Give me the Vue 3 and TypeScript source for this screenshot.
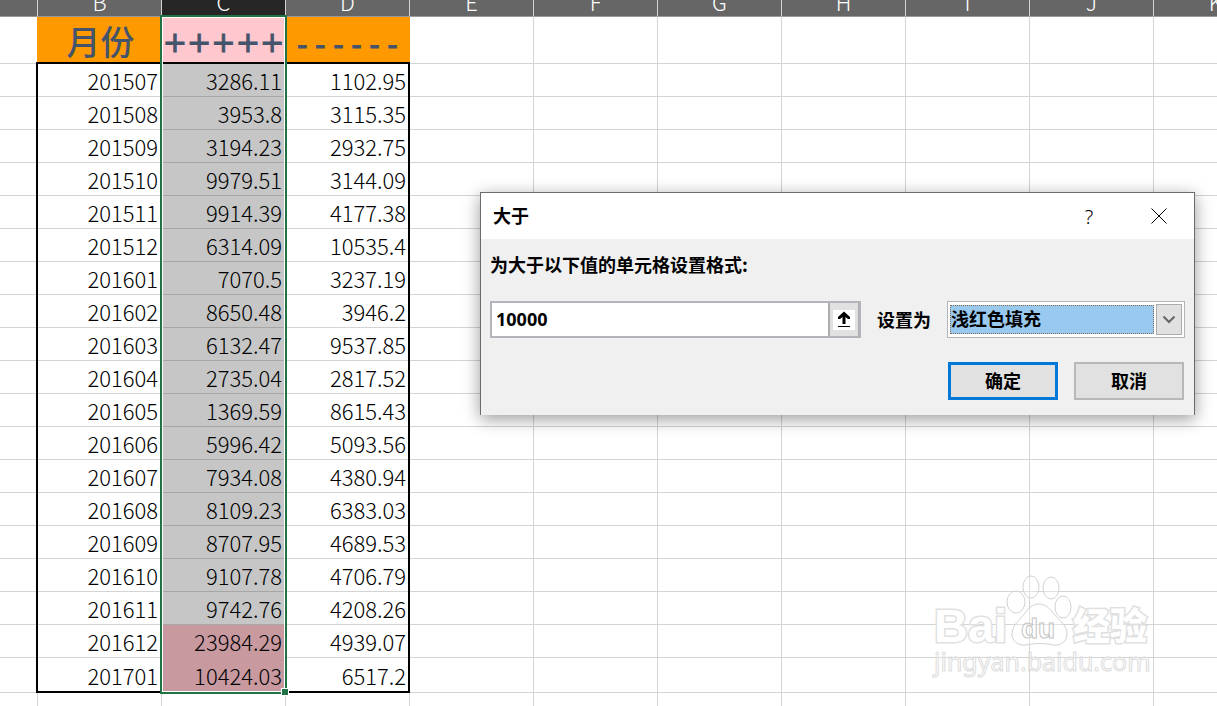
<script setup lang="ts">
import { ref } from 'vue'

interface Row {
  month: string
  income: string
  expense: string
}

const letters: string[] = ['', 'B', 'C', 'D', 'E', 'F', 'G', 'H', 'I', 'J', 'K', 'L', 'M', 'N', 'O']
const emptyColumns = letters.length - 4

const rows: Row[] = [
  { month: '201507', income: '3286.11', expense: '1102.95' },
  { month: '201508', income: '3953.8', expense: '3115.35' },
  { month: '201509', income: '3194.23', expense: '2932.75' },
  { month: '201510', income: '9979.51', expense: '3144.09' },
  { month: '201511', income: '9914.39', expense: '4177.38' },
  { month: '201512', income: '6314.09', expense: '10535.4' },
  { month: '201601', income: '7070.5', expense: '3237.19' },
  { month: '201602', income: '8650.48', expense: '3946.2' },
  { month: '201603', income: '6132.47', expense: '9537.85' },
  { month: '201604', income: '2735.04', expense: '2817.52' },
  { month: '201605', income: '1369.59', expense: '8615.43' },
  { month: '201606', income: '5996.42', expense: '5093.56' },
  { month: '201607', income: '7934.08', expense: '4380.94' },
  { month: '201608', income: '8109.23', expense: '6383.03' },
  { month: '201609', income: '8707.95', expense: '4689.53' },
  { month: '201610', income: '9107.78', expense: '4706.79' },
  { month: '201611', income: '9742.76', expense: '4208.26' },
  { month: '201612', income: '23984.29', expense: '4939.07' },
  { month: '201701', income: '10424.03', expense: '6517.2' },
]

const threshold = ref('10000')
const format = ref('light-red')

const isGreater = (value: string): boolean => Number(value) > Number(threshold.value)
</script>

<template>
  <main class="workbook">
    <table class="sheet">
      <colgroup>
        <col class="col-first" />
        <col v-for="n in letters.length - 1" :key="n" class="col" />
      </colgroup>
      <thead>
        <tr class="letters">
          <th v-for="l in letters" :key="l" scope="col" :class="{ active: l === 'C' }">
            <div class="letter">{{ l }}</div>
          </th>
        </tr>
      </thead>
      <tbody>
        <tr class="titles">
          <td class="before"></td>
          <td class="title month">月份</td>
          <td class="title plus">+++++</td>
          <td class="title minus">------</td>
          <td v-for="n in emptyColumns" :key="n"></td>
        </tr>
        <tr v-for="row in rows" :key="row.month" class="data">
          <td></td>
          <td>{{ row.month }}</td>
          <td class="selected" :class="{ greater: isGreater(row.income) }">{{ row.income }}</td>
          <td>{{ row.expense }}</td>
          <td v-for="n in emptyColumns" :key="n"></td>
        </tr>
        <tr class="blank">
          <td v-for="l in letters" :key="l"></td>
        </tr>
      </tbody>
    </table>

    <div class="frame"></div>
    <div class="selection"><span class="handle"></span></div>

    <svg class="watermark" width="224" height="112" viewBox="0 0 224 112" aria-label="Baidu 经验">
      <g class="outline">
        <text class="bai" x="4" y="72">Bai</text>
        <path d="M109 34 C116 34 120 39 124 44 C129 50 137 55 137 64 C137 72 130 76 123 75 C114 73 105 73 96 75 C88 76 82 71 82 64 C82 55 90 50 95 43 C99 38 102 34 109 34 Z" />
        <ellipse cx="86" cy="32" rx="9" ry="11" />
        <ellipse cx="101" cy="17" rx="8" ry="11" />
        <ellipse cx="121" cy="18" rx="8" ry="11" />
        <ellipse cx="133" cy="37" rx="8" ry="11" />
        <text class="du" x="91" y="68">du</text>
        <text class="jy" x="143" y="70">经验</text>
        <text class="site" x="4" y="101">jingyan.baidu.com</text>
      </g>
    </svg>

    <form class="dialog" role="dialog" aria-labelledby="dialog-title" @submit.prevent>
      <header class="dialog-bar">
        <h1 id="dialog-title">大于</h1>
        <button type="button" class="bar-button" aria-label="帮助">?</button>
        <button type="button" class="bar-button" aria-label="关闭">
          <svg width="16" height="16" viewBox="0 0 16 16"><path d="M0.5 0.5 L15.5 15.5 M15.5 0.5 L0.5 15.5" /></svg>
        </button>
      </header>
      <div class="dialog-body">
        <label for="threshold">为大于以下值的单元格设置格式:</label>
        <div class="fields">
          <div class="range">
            <input id="threshold" v-model="threshold" type="text" />
            <button type="button" class="picker" aria-label="选择区域">
              <svg width="22" height="20" viewBox="0 0 22 20">
                <path class="shaft" d="M11 4 V14" />
                <path class="head" d="M11 1.500 L17 7 V9 H15 L11 6 L7 9 H5 V7 Z" />
                <path class="base" d="M5 16.500 H17" />
              </svg>
            </button>
          </div>
          <label for="format">设置为</label>
          <div class="combo">
            <select id="format" v-model="format">
              <option value="light-red">浅红色填充</option>
            </select>
            <span class="arrow">
              <svg width="14" height="9" viewBox="0 0 14 9"><path d="M1.500 1.500 L7 7 L12.500 1.500" /></svg>
            </span>
          </div>
        </div>
        <div class="actions">
          <button type="submit" class="ok">确定</button>
          <button type="button">取消</button>
        </div>
      </div>
    </form>
  </main>
</template>

<style>
body {
  margin: 0;
  background: #fff;
}
</style>

<style scoped>
.workbook {
  position: relative;
  height: 100vh;
  overflow: hidden;
  font-family: "Noto Sans CJK SC", "Noto Sans", sans-serif;
  color: #000;
}

.sheet {
  width: 1774px;
  table-layout: fixed;
  border-collapse: separate;
  border-spacing: 0;
}

.col-first {
  width: 38px;
}

.col {
  width: 124px;
}

th,
td {
  box-sizing: border-box;
  padding: 0;
  border-right: 1px solid #d4d4d4;
  border-bottom: 1px solid #d4d4d4;
}

.letters th {
  height: 17px;
  background: #666;
  border-bottom-color: #999;
  color: #fff;
  font-size: 22px;
  font-weight: 300;
}

.letters .active {
  background: #262626;
}

.letter {
  display: flex;
  align-items: flex-end;
  justify-content: center;
  height: 16px;
  line-height: 30px;
  overflow: hidden;
}

.titles td {
  height: 47px;
}

.titles .before {
  border-right-color: #f90;
}

.titles .title {
  padding-top: 2px;
  background: #f90;
  border-color: #f90;
  color: #44546a;
  text-align: center;
  line-height: 44px;
}

.titles .month {
  padding-left: 2px;
  font-size: 34px;
  font-weight: 500;
}

.titles .plus {
  padding-top: 4px;
  background: #ffc7ce;
  border-color: #ffc7ce;
  font-family: "DejaVu Sans", sans-serif;
  font-size: 29px;
  line-height: 42px;
  -webkit-text-stroke: 1px #44546a;
}

.titles .minus {
  padding-top: 10px;
  font-family: "DejaVu Sans Mono", monospace;
  font-size: 30px;
  line-height: 36px;
  -webkit-text-stroke: 1px #44546a;
}

.data td {
  height: 33px;
  padding: 2px 3px 2px 0;
  font-size: 22px;
  font-weight: 300;
  line-height: 28px;
  text-align: right;
}

.data:nth-last-child(2) td {
  height: 35px;
}

.data .selected {
  background: #c6c6c6;
  border-bottom-color: #a6a6a6;
}

.data .greater {
  background: #c89aa0;
  border-bottom-color: #c89aa0;
}

.blank td {
  height: 34px;
}

.frame {
  position: absolute;
  top: 62px;
  left: 36px;
  box-sizing: border-box;
  width: 374px;
  height: 631px;
  border: 2px solid #000;
}

.selection {
  position: absolute;
  top: 15px;
  left: 160px;
  box-sizing: border-box;
  width: 127px;
  height: 679px;
  border: 2px solid #217346;
  box-shadow: inset 0 0 0 1px #fff;
}

.handle {
  position: absolute;
  right: -4px;
  bottom: -4px;
  width: 6px;
  height: 6px;
  background: #217346;
  border: 1px solid #fff;
}

.watermark {
  position: absolute;
  top: 570px;
  left: 930px;
}

.outline {
  fill: #fff;
  fill-opacity: 0.3;
  stroke: #d2d2d2;
  stroke-width: 1;
}

.bai,
.du {
  font-family: "Liberation Sans", sans-serif;
  font-weight: 700;
}

.bai {
  font-size: 47px;
}

.bai,
.jy {
  stroke: #e0e0e0;
  stroke-width: 3;
  paint-order: stroke;
  fill-opacity: 1;
}

.du {
  font-size: 28px;
  stroke: #c4c4c4;
}

.jy {
  font-size: 37px;
  font-weight: 900;
}

.site {
  font-family: "Noto Sans", sans-serif;
  font-size: 25px;
  stroke: #dcdcdc;
}

.dialog {
  position: absolute;
  top: 192px;
  left: 480px;
  box-sizing: border-box;
  width: 715px;
  border: 1px solid #6b6b6b;
  border-bottom: 0;
  background: #f0f0f0;
  box-shadow: 0 4px 16px rgba(0, 0, 0, 0.4);
  font-size: 18px;
  font-weight: 700;
}

.dialog button,
.dialog input,
.dialog select {
  box-sizing: border-box;
  margin: 0;
  border: 0;
  padding: 0;
  font: inherit;
  color: #000;
}

.dialog-bar {
  display: flex;
  align-items: center;
  height: 46px;
  padding-left: 12px;
  background: #fff;
}

.dialog-bar h1 {
  flex: 1;
  margin: 0;
  padding-bottom: 2px;
  font-size: 18px;
}

.dialog .bar-button {
  display: flex;
  align-items: center;
  justify-content: center;
  width: 70px;
  height: 46px;
  background: transparent;
  font-family: "Noto Sans", sans-serif;
  font-size: 20px;
  font-weight: 300;
}

.bar-button path {
  fill: none;
  stroke: #000;
  stroke-width: 1;
}

.dialog-body {
  padding: 12px 9px 15px;
}

.dialog-body label {
  line-height: 26px;
}

.fields {
  display: flex;
  align-items: center;
  gap: 16px;
  margin-top: 24px;
}

.fields label {
  padding-bottom: 2px;
}

.range {
  display: flex;
  flex: 1;
  box-sizing: border-box;
  height: 37px;
  border: 2px solid #b4b4ba;
  background: #fff;
}

.range input {
  flex: 1;
  min-width: 0;
  background: #fff;
  font-family: "Noto Sans", sans-serif;
  outline: 0;
}

.dialog .range input {
  padding: 0 4px 2px;
}

.dialog .picker {
  display: flex;
  align-items: center;
  justify-content: center;
  width: 31px;
  border: 2px solid #adadb2;
  border-width: 0 1px 0 2px;
  background: #e1e1e1;
}

.picker svg {
  background: #fff;
}

.shaft,
.base {
  fill: none;
  stroke: #000;
}

.shaft {
  stroke-width: 3;
}

.base {
  stroke-width: 1;
}

.combo {
  display: flex;
  align-items: stretch;
  gap: 2px;
  box-sizing: border-box;
  width: 238px;
  height: 37px;
  padding: 2px;
  border: 1px solid #b4b4ba;
  background: #fff;
}

.dialog .combo select {
  flex: 1;
  margin: 1px 0;
  border: 1px dotted #8a6a4a;
  border-radius: 0;
  padding-bottom: 4px;
  background: #99c9ef;
  line-height: 24px;
  appearance: none;
  outline: 0;
}

.arrow {
  display: flex;
  align-items: center;
  justify-content: center;
  box-sizing: border-box;
  width: 26px;
  border: 1px solid #adadad;
  background: #e1e1e1;
}

.arrow path {
  fill: none;
  stroke: #666;
  stroke-width: 2;
}

.actions {
  display: flex;
  justify-content: flex-end;
  gap: 16px;
  margin-top: 24px;
  padding-right: 1px;
}

.dialog .actions button {
  width: 110px;
  height: 38px;
  padding-bottom: 2px;
  border: 2px solid #b8b8b8;
  background: #e1e1e1;
}

.dialog .actions .ok {
  border: 3px solid #0078d7;
}
</style>
